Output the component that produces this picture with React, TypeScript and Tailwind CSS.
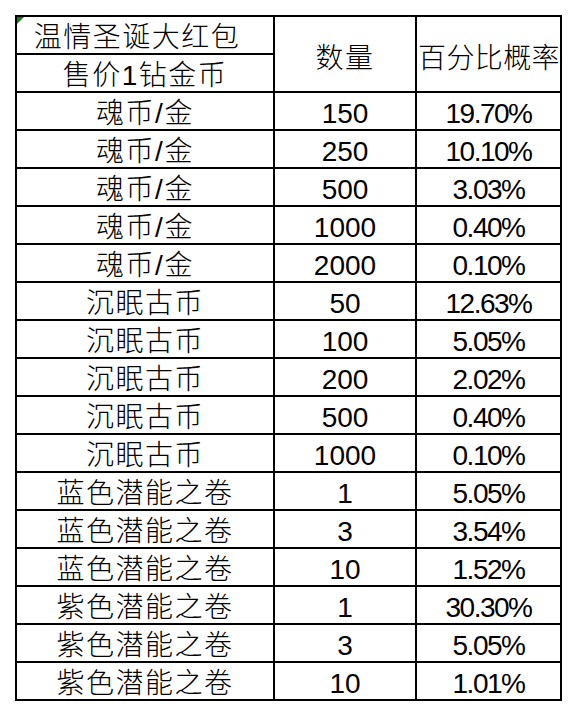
import React from "react";

const rows: [string, string, string][] = [
  ["魂币/金", "150", "19.70%"],
  ["魂币/金", "250", "10.10%"],
  ["魂币/金", "500", "3.03%"],
  ["魂币/金", "1000", "0.40%"],
  ["魂币/金", "2000", "0.10%"],
  ["沉眠古币", "50", "12.63%"],
  ["沉眠古币", "100", "5.05%"],
  ["沉眠古币", "200", "2.02%"],
  ["沉眠古币", "500", "0.40%"],
  ["沉眠古币", "1000", "0.10%"],
  ["蓝色潜能之卷", "1", "5.05%"],
  ["蓝色潜能之卷", "3", "3.54%"],
  ["蓝色潜能之卷", "10", "1.52%"],
  ["紫色潜能之卷", "1", "30.30%"],
  ["紫色潜能之卷", "3", "5.05%"],
  ["紫色潜能之卷", "10", "1.01%"],
];

const cell =
  "bg-white flex items-center justify-center pt-[6px] whitespace-nowrap overflow-hidden leading-none font-light";

export default function App() {
  return (
    <div className="min-h-[716px] w-[578px] bg-white text-black">
      <div
        className="ml-[15px] pt-[15px]"
        style={{ fontFamily: '"Liberation Sans", "Noto Sans CJK SC", sans-serif' }}
      >
        <div className="grid w-[547px] grid-cols-[256px_140px_143px] auto-rows-[36px] gap-[2px] bg-black p-[2px] text-[28px]">
          <div className={`${cell} relative pr-[16px] tracking-[1.5px]`}>
            <span className="absolute left-0 top-0 h-0 w-0 border-t-[7px] border-r-[7px] border-t-[#1e7b1e] border-r-transparent" />
            温情圣诞大红包
          </div>
          <div className={`${cell} row-span-2 pt-[10px] tracking-[1.5px]`}>数量</div>
          <div className={`${cell} row-span-2 justify-start pl-[1px] pt-[10px] tracking-[0.4px]`}>百分比概率</div>
          <div className={`${cell} tracking-[1.5px]`}>售价1钻金币</div>
          {rows.map((r, i) => (
            <React.Fragment key={i}>
              <div className={`${cell} tracking-[1.5px]`}>{r[0]}</div>
              <div className={cell}>{r[1]}</div>
              <div className={`${cell} tracking-[-1.5px]`}>{r[2]}</div>
            </React.Fragment>
          ))}
        </div>
      </div>
    </div>
  );
}
